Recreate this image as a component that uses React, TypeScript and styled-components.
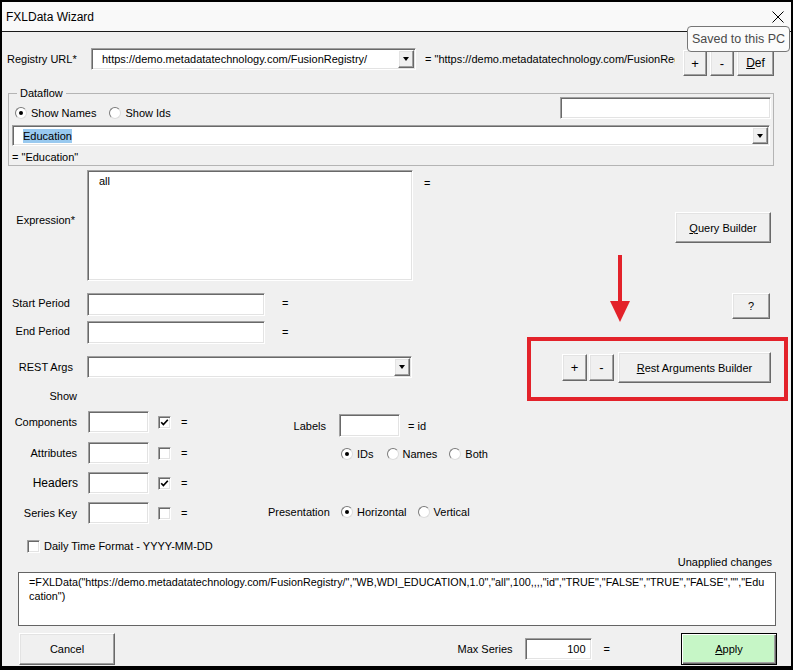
import React from 'react'
import styled, { createGlobalStyle, css } from 'styled-components'

// the text box wraps the formula inside "Education"
const FORMULA_1 =
    '=FXLData("https://demo.metadatatechnology.com/FusionRegistry/","WB,WDI_EDUCATION,1.0","all",100,,,,"id","TRUE","FALSE","TRUE","FALSE","","Edu'
const FORMULA_2 = 'cation")'

const GlobalStyle = createGlobalStyle`
html, body {
margin: 0;
padding: 0;
background: #f0f0f0;
}
body {
font-family: "Liberation Sans", Arial, sans-serif;
font-size: 11px;
color: #000;
}
* { box-sizing: border-box; }
`

const sunken = css`
background: #fff;
border: 1px solid;
border-color: #a0a0a0 #fff #fff #a0a0a0;
box-shadow: inset 1px 1px 0 #696969, inset -1px -1px 0 #e3e3e3;
`

const raised = css`
background: #f0f0f0;
border: 1px solid;
border-color: #fff #696969 #696969 #fff;
box-shadow: inset -1px -1px 0 #a0a0a0, inset 1px 1px 0 #e3e3e3;
`

const RadioOption: React.FC<{ on?: boolean; ml?: number; children: React.ReactNode }> = ({ on, ml, children }) => (
    <RadioItem $ml={ml ?? 0}>
        <RadioDot $on={!!on} />
        {children}
    </RadioItem>
)

const CheckBox: React.FC<{ checked?: boolean; ml?: number }> = ({ checked, ml }) => (
    <CheckBoxBox $ml={ml ?? 0}>
        {checked && (
            <svg width="9" height="9" viewBox="0 0 9 9">
                <path d="M1.2 4.2 L3.4 6.6 L7.8 1.8" stroke="#000" strokeWidth="1.7" fill="none" />
            </svg>
        )}
    </CheckBoxBox>
)

const App = () => {
    return (
        <>
            <GlobalStyle />
            <Window>
                <TitleBar>
                    <Title>FXLData Wizard</Title>
                    <svg width="12" height="12" viewBox="0 0 12 12">
                        <path d="M0.5 0.5 L11.5 11.5 M11.5 0.5 L0.5 11.5" stroke="#000" strokeWidth="1" />
                    </svg>
                </TitleBar>

                <Body>
                    <RegistryRow>
                        <RegLabel>Registry URL*</RegLabel>
                        <Combo $w={325} $h={22}>
                            <ComboText>https://demo.metadatatechnology.com/FusionRegistry/</ComboText>
                            <DropBtn />
                        </Combo>
                        <EqText>= "https://demo.metadatatechnology.com/FusionRegistry/"</EqText>
                        <SmallBtns>
                            <Btn $w={24} $h={26} $size={13}>+</Btn>
                            <Btn $w={24} $h={26} $size={13}>-</Btn>
                            <Btn $w={37} $h={26} $size={12}><u>D</u>ef</Btn>
                        </SmallBtns>
                    </RegistryRow>

                    <Group>
                        <Legend>Dataflow</Legend>
                        <GroupTop>
                            <RadioSet $mt={9}>
                                <RadioOption on>Show Names</RadioOption>
                                <RadioOption ml={13}>Show Ids</RadioOption>
                            </RadioSet>
                            <SearchBox $w={211} $h={22} />
                        </GroupTop>
                        <FlowCombo $w={758} $h={21}>
                            <ComboText>
                                <Selected>Education</Selected>
                            </ComboText>
                            <DropBtn />
                        </FlowCombo>
                        <EqLine>= "Education"</EqLine>
                    </Group>

                    <ExprRow>
                        <FieldLabel $pr={12} $mt={43}>Expression*</FieldLabel>
                        <AreaBox>all</AreaBox>
                        <Eq $ml={11} $mt={6}>=</Eq>
                        <QueryBtn $w={96} $h={31}><u>Q</u>uery Builder</QueryBtn>
                    </ExprRow>

                    <MiddleBlock>
                        <LeftCol>
                            <FieldRow $mt={0}>
                                <FieldLabel $pr={17} $mt={3}>Start Period</FieldLabel>
                                <TextBox $w={178} $h={23} />
                                <Eq $ml={17} $mt={3}>=</Eq>
                            </FieldRow>
                            <FieldRow $mt={5}>
                                <FieldLabel $pr={17} $mt={3}>End Period</FieldLabel>
                                <TextBox $w={178} $h={23} />
                                <Eq $ml={17} $mt={4}>=</Eq>
                            </FieldRow>
                            <FieldRow $mt={12}>
                                <FieldLabel $pr={14} $mt={4}>REST Args</FieldLabel>
                                <Combo $w={325} $h={22}>
                                    <ComboText />
                                    <DropBtn />
                                </Combo>
                            </FieldRow>
                            <FieldLabel $pr={10} $mt={11}>Show</FieldLabel>
                        </LeftCol>

                        <RightCol>
                            <HelpBtn $w={38} $h={26}>?</HelpBtn>
                            <RedBox>
                                <Btn $w={25} $h={27} $size={13}>+</Btn>
                                <Btn $w={25} $h={27} $size={13} $ml={2}>-</Btn>
                                <Btn $w={153} $h={31} $ml={4}><u>R</u>est Arguments Builder</Btn>
                            </RedBox>
                        </RightCol>
                    </MiddleBlock>

                    <ShowSection>
                        <LeftShow>
                            <ShowRow $mt={0}>
                                <FieldLabel $w={86} $pr={11}>Components</FieldLabel>
                                <TextBox $w={61} $h={22} />
                                <CheckBox checked ml={9} />
                                <Eq $ml={10}>=</Eq>
                            </ShowRow>
                            <ShowRow $mt={9}>
                                <FieldLabel $w={86} $pr={11}>Attributes</FieldLabel>
                                <TextBox $w={61} $h={22} />
                                <CheckBox ml={9} />
                                <Eq $ml={10}>=</Eq>
                            </ShowRow>
                            <ShowRow $mt={8}>
                                <FieldLabel $w={86} $pr={10} $size={12}>Headers</FieldLabel>
                                <TextBox $w={61} $h={22} />
                                <CheckBox checked ml={9} />
                                <Eq $ml={10}>=</Eq>
                            </ShowRow>
                            <ShowRow $mt={8}>
                                <FieldLabel $w={86} $pr={11}>Series Key</FieldLabel>
                                <TextBox $w={61} $h={22} />
                                <CheckBox ml={9} />
                                <Eq $ml={10}>=</Eq>
                            </ShowRow>
                            <DailyRow>
                                <CheckBox />
                                <span>Daily Time Format - YYYY-MM-DD</span>
                            </DailyRow>
                        </LeftShow>

                        <RightShow>
                            <ShowRow $mt={3}>
                                <FieldLabel $w={61} $pr={3}>Labels</FieldLabel>
                                <LabelBox $w={61} $h={23} />
                                <Eq $ml={8}>= id</Eq>
                            </ShowRow>
                            <RadioSet $mt={10} $pl={73}>
                                <RadioOption on>IDs</RadioOption>
                                <RadioOption ml={13}>Names</RadioOption>
                                <RadioOption ml={12}>Both</RadioOption>
                            </RadioSet>
                            <RadioSet $mt={44}>
                                <FieldLabel $w={61} $pr={0}>Presentation</FieldLabel>
                                <RadioOption on ml={12}>Horizontal</RadioOption>
                                <RadioOption ml={11}>Vertical</RadioOption>
                            </RadioSet>
                        </RightShow>
                    </ShowSection>

                    <Unapplied>Unapplied changes</Unapplied>
                    <FormulaBox>
                        {FORMULA_1}
                        <br />
                        {FORMULA_2}
                    </FormulaBox>

                    <BottomRow>
                        <CancelBtn $w={96} $h={32}>Cancel</CancelBtn>
                        <MaxGroup>
                            <span>Max Series</span>
                            <NumBox $w={67} $h={22}>100</NumBox>
                            <Eq $ml={12}>=</Eq>
                            <ApplyBtn><u>A</u>pply</ApplyBtn>
                        </MaxGroup>
                    </BottomRow>
                </Body>

                <Arrow width="24" height="68" viewBox="0 0 24 68">
                    <path d="M12 0 L12 48" stroke="#e3222a" strokeWidth="4" />
                    <polygon points="2,46 22,46 12,67" fill="#e3222a" />
                </Arrow>

                <Tooltip>Saved to this PC</Tooltip>
            </Window>
        </>
    )
}

export default App

const Window = styled.div`
position: relative;
width: 793px;
height: 670px;
border-style: solid;
border-color: #000;
border-width: 2px 2px 4px 2px;
background: #f0f0f0;
display: flex;
flex-direction: column;
overflow: hidden;
`

const TitleBar = styled.div`
height: 30px;
flex: none;
background: #f9f9f9;
border-bottom: 1px solid #1a1a1a;
display: flex;
align-items: center;
justify-content: space-between;
padding: 0 7px 0 4px;
`

const Title = styled.div`
font-size: 12px;
`

const Body = styled.div`
flex: 1;
display: flex;
flex-direction: column;
`

const RegistryRow = styled.div`
display: flex;
align-items: flex-start;
margin-top: 16px;
height: 28px;
`

const RegLabel = styled.div`
width: 89px;
flex: none;
padding-left: 5px;
margin-top: 4px;
line-height: 14px;
`

const Combo = styled.div<{ $w: number; $h: number }>`
${sunken};
width: ${p => p.$w}px;
height: ${p => p.$h}px;
flex: none;
display: flex;
align-items: stretch;
`

const FlowCombo = styled(Combo)`
margin-top: 6px;
`

const ComboText = styled.div`
flex: 1;
padding-left: 10px;
display: flex;
align-items: center;
white-space: nowrap;
overflow: hidden;
`

const Selected = styled.span`
background: #99c9ef;
line-height: 14px;
`

const DropBtn = styled.div`
${raised};
width: 16px;
flex: none;
margin: 1px;
display: flex;
align-items: center;
justify-content: center;
&::after {
content: '';
border-left: 3.5px solid transparent;
border-right: 3.5px solid transparent;
border-top: 4px solid #000;
}
`

const EqText = styled.div`
width: 250px;
flex: none;
margin: 4px 0 0 9px;
line-height: 14px;
white-space: nowrap;
overflow: hidden;
`

const SmallBtns = styled.div`
display: flex;
gap: 3px;
margin: 2px 0 0 8px;
`

const Btn = styled.div<{ $w: number; $h: number; $size?: number; $ml?: number }>`
${raised};
width: ${p => p.$w}px;
height: ${p => p.$h}px;
margin-left: ${p => p.$ml ?? 0}px;
font-size: ${p => p.$size ?? 11}px;
flex: none;
display: flex;
align-items: center;
justify-content: center;
`

const QueryBtn = styled(Btn)`
margin: 42px 20px 0 auto;
`

const HelpBtn = styled(Btn)`
margin-right: 18px;
`

const CancelBtn = styled(Btn)`
margin-left: 17px;
`

const ApplyBtn = styled.div`
width: 96px;
height: 32px;
margin-left: 71px;
background: #c6f6c6;
border: 1px solid #000;
box-shadow: inset 1px 1px 0 #fff, inset -1px -1px 0 #696969, inset -2px -2px 0 #a0a0a0;
display: flex;
align-items: center;
justify-content: center;
`

const TextBox = styled.div<{ $w: number; $h: number }>`
${sunken};
width: ${p => p.$w}px;
height: ${p => p.$h}px;
flex: none;
`

const SearchBox = styled(TextBox)`
margin-left: auto;
`

const LabelBox = styled(TextBox)`
margin-left: 10px;
`

const NumBox = styled(TextBox)`
margin-left: 12px;
display: flex;
align-items: center;
justify-content: flex-end;
padding-right: 5px;
`

const AreaBox = styled.div`
${sunken};
width: 326px;
height: 111px;
flex: none;
padding: 3px 11px;
line-height: 14px;
`

const Group = styled.div`
position: relative;
margin: 17px 0 0 6px;
width: 766px;
height: 73px;
border: 1px solid #b4b4b4;
padding: 3px 2px 1px 3px;
display: flex;
flex-direction: column;
`

const Legend = styled.span`
position: absolute;
top: -8px;
left: 8px;
padding: 0 3px;
background: #f0f0f0;
line-height: 14px;
`

const GroupTop = styled.div`
display: flex;
align-items: flex-start;
height: 22px;
padding-left: 3px;
`

const RadioSet = styled.div<{ $mt: number; $pl?: number }>`
display: flex;
align-items: center;
height: 14px;
margin-top: ${p => p.$mt}px;
padding-left: ${p => p.$pl ?? 0}px;
`

const RadioItem = styled.div<{ $ml: number }>`
display: flex;
align-items: center;
gap: 4px;
margin-left: ${p => p.$ml}px;
line-height: 14px;
`

const RadioDot = styled.span<{ $on: boolean }>`
position: relative;
width: 12px;
height: 12px;
flex: none;
border-radius: 50%;
background: #fff;
border: 1px solid;
border-color: #7a7a7a #dcdcdc #dcdcdc #7a7a7a;
&::after {
content: '';
display: ${p => (p.$on ? 'block' : 'none')};
position: absolute;
left: 3px;
top: 3px;
width: 4px;
height: 4px;
border-radius: 50%;
background: #000;
}
`

const CheckBoxBox = styled.span<{ $ml: number }>`
${sunken};
width: 13px;
height: 13px;
flex: none;
margin-left: ${p => p.$ml}px;
display: flex;
align-items: center;
justify-content: center;
`

const EqLine = styled.div`
margin-top: 4px;
line-height: 14px;
`

const ExprRow = styled.div`
display: flex;
align-items: flex-start;
margin-top: 4px;
height: 111px;
`

const FieldLabel = styled.div<{ $pr: number; $mt?: number; $w?: number; $size?: number }>`
width: ${p => p.$w ?? 85}px;
flex: none;
text-align: right;
padding-right: ${p => p.$pr}px;
margin-top: ${p => p.$mt ?? 0}px;
font-size: ${p => p.$size ?? 11}px;
line-height: 14px;
white-space: nowrap;
`

const Eq = styled.div<{ $ml: number; $mt?: number }>`
flex: none;
margin-left: ${p => p.$ml}px;
margin-top: ${p => p.$mt ?? 0}px;
line-height: 14px;
`

const MiddleBlock = styled.div`
display: flex;
align-items: flex-start;
margin-top: 12px;
`

const LeftCol = styled.div`
display: flex;
flex-direction: column;
`

const FieldRow = styled.div<{ $mt: number }>`
display: flex;
align-items: flex-start;
margin-top: ${p => p.$mt}px;
`

const RightCol = styled.div`
margin: 0 3px 0 auto;
display: flex;
flex-direction: column;
align-items: flex-end;
`

const RedBox = styled.div`
margin-top: 18px;
width: 261px;
height: 64px;
border: 4px solid #e3222a;
display: flex;
justify-content: flex-end;
align-items: center;
padding: 0 13px 3px 0;
`

const ShowSection = styled.div`
display: flex;
margin-top: 8px;
`

const LeftShow = styled.div`
width: 266px;
flex: none;
display: flex;
flex-direction: column;
`

const RightShow = styled.div`
display: flex;
flex-direction: column;
`

const ShowRow = styled.div<{ $mt: number }>`
display: flex;
align-items: center;
margin-top: ${p => p.$mt}px;
`

const DailyRow = styled.div`
display: flex;
align-items: center;
gap: 4px;
margin-top: 15px;
padding-left: 25px;
line-height: 14px;
`

const Unapplied = styled.div`
margin-top: 2px;
padding-right: 19px;
text-align: right;
line-height: 14px;
`

const FormulaBox = styled.div`
margin: 3px 0 0 16px;
width: 758px;
height: 54px;
background: #fff;
border: 1px solid #646464;
padding: 2px 4px 0 10px;
font-size: 10.8px;
line-height: 14px;
white-space: nowrap;
overflow: hidden;
`

const BottomRow = styled.div`
display: flex;
align-items: center;
margin-top: 7px;
height: 32px;
`

const MaxGroup = styled.div`
margin: 0 14px 0 auto;
display: flex;
align-items: center;
`

const Arrow = styled.svg`
position: absolute;
left: 606px;
top: 253px;
`

const Tooltip = styled.div`
position: absolute;
left: 685px;
top: 24px;
width: 103px;
height: 26px;
background: #fbfbfb;
border: 1px solid #767676;
border-radius: 4px;
display: flex;
align-items: center;
justify-content: center;
font-size: 12.5px;
color: #4a4a4a;
`
